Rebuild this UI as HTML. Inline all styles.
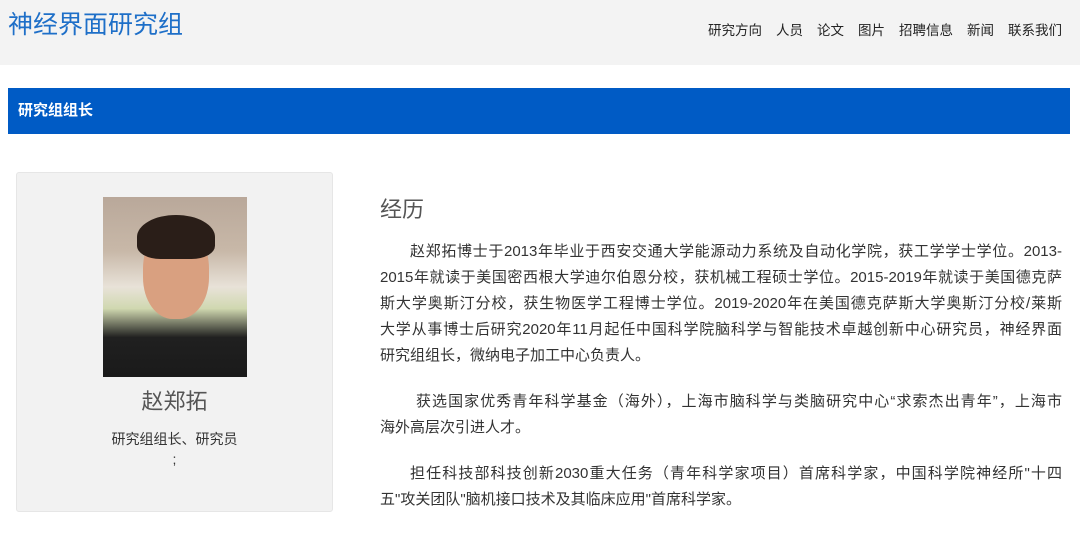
<!DOCTYPE html>
<html><head><meta charset="utf-8"><style>
body{margin:0;width:1080px;height:527px;overflow:hidden;background:#fff;font-family:"Liberation Sans","Noto Sans CJK SC",sans-serif;color:#333}
.hd{position:absolute;left:0;top:0;width:1080px;height:65px;background:#f3f3f3}
.logo{position:absolute;left:8px;top:5px;font-size:25px;color:#1e6fc8}
.nav{position:absolute;right:18px;top:19px;font-size:13.5px;color:#222}
.nav span{margin-left:14px}
.bar{position:absolute;left:8px;top:88px;width:1062px;height:46px;background:#005bc5;color:#fff;font-size:15px;font-weight:bold;line-height:46px;text-indent:10px}
.card{position:absolute;left:16px;top:172px;width:315px;height:338px;background:#f2f2f2;border:1px solid #e6e6e6;border-radius:3px}
.photo{position:absolute;left:86px;top:24px;width:144px;height:180px;background:linear-gradient(180deg,#b9a89a 0%,#c8b8a8 30%,#e8e2d8 50%,#d0d8b0 62%,#202020 78%,#1a1a1a 100%)}
.face{position:absolute;left:40px;top:30px;width:66px;height:92px;border-radius:45%;background:#d9a080}
.hair{position:absolute;left:34px;top:18px;width:78px;height:44px;border-radius:50% 50% 30% 30%;background:#2a1e18}
.name{position:absolute;left:0;width:315px;top:211px;text-align:center;font-size:22px;color:#555}
.sub{position:absolute;left:0;width:315px;top:256px;text-align:center;font-size:14px;line-height:20px;color:#333}
.main{position:absolute;left:380px;top:194px;width:682px}
h2{margin:0 0 13px;font-weight:normal;font-size:22px;color:#555;line-height:32px}
.p{margin:0 0 20px;font-size:15px;line-height:26px;color:#333}
.p div{white-space:nowrap}
.p .j{text-align:justify;text-align-last:justify;white-space:normal}
.p .i{padding-left:30px}
</style></head><body>
<div class="hd"><div class="logo">神经界面研究组</div>
<div class="nav"><span>研究方向</span><span>人员</span><span>论文</span><span>图片</span><span>招聘信息</span><span>新闻</span><span>联系我们</span></div></div>
<div class="bar">研究组组长</div>
<div class="card"><div class="photo"><div class="face"></div><div class="hair"></div></div>
<div class="name">赵郑拓</div><div class="sub">研究组组长、研究员<br>;</div></div>
<div class="main"><h2>经历</h2>
<div class="p"><div class="j i">赵郑拓博士于2013年毕业于西安交通大学能源动力系统及自动化学院，获工学学士学位。2013-</div><div class="j">2015年就读于美国密西根大学迪尔伯恩分校，获机械工程硕士学位。2015-2019年就读于美国德克萨</div><div class="j">斯大学奥斯汀分校，获生物医学工程博士学位。2019-2020年在美国德克萨斯大学奥斯汀分校/莱斯</div><div class="j">大学从事博士后研究2020年11月起任中国科学院脑科学与智能技术卓越创新中心研究员，神经界面</div><div>研究组组长，微纳电子加工中心负责人。</div></div>
<div class="p"><div class="j i" style="padding-left:36px">获选国家优秀青年科学基金（海外），上海市脑科学与类脑研究中心“求索杰出青年”，上海市</div><div>海外高层次引进人才。</div></div>
<div class="p"><div class="j i">担任科技部科技创新2030重大任务（青年科学家项目）首席科学家，中国科学院神经所"十四</div><div>五"攻关团队"脑机接口技术及其临床应用"首席科学家。</div></div>
</div>
</body></html>
